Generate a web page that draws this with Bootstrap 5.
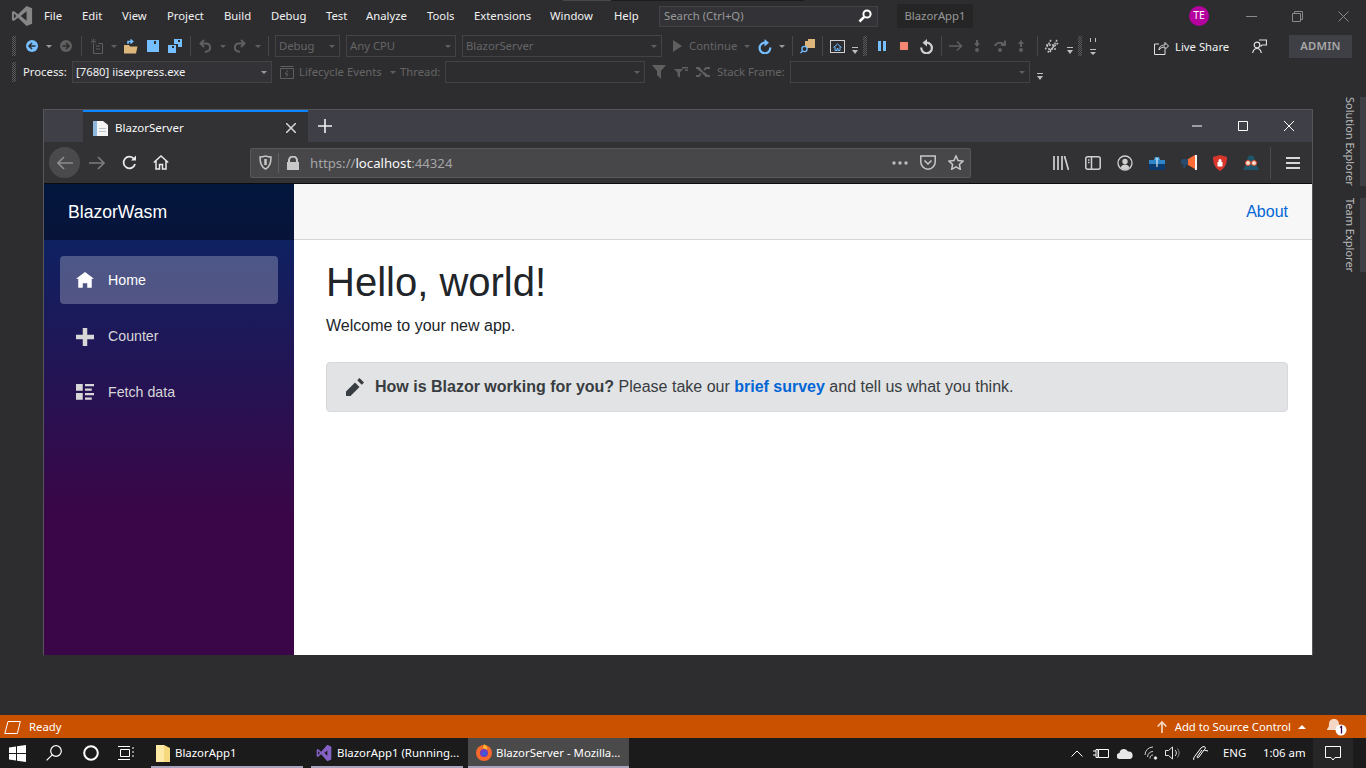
<!DOCTYPE html>
<html lang="en">
<head>
<meta charset="UTF-8" />
<meta name="viewport" content="width=device-width, initial-scale=1" />
<title>BlazorApp1 (Running)</title>
<link href="https://cdn.jsdelivr.net/npm/bootstrap@5.3.0/dist/css/bootstrap.min.css" rel="stylesheet" />
<style>
    html, body { height: 100%; }
    body {
        width: 1366px; height: 768px; overflow: hidden;
        background: #2d2d30; color: #f1f1f1;
        font-family: "Noto Sans", "Liberation Sans", sans-serif; font-size: 11.3px;
    }
    svg { display: block; flex-shrink: 0; }
    .vs-row { display: grid; align-items: center; white-space: nowrap; }
    .vs-title {
        height: 32px; padding-left: 11px;
        grid-template-columns: 33px 38px 40px 45px 57px 47px 55px 40px 61px 47px 76px 64px 45px 238px 292px 57px 46px 46px auto;
        background: linear-gradient(#47474a, #47474a) 563px 0 / 48px 1px no-repeat, linear-gradient(#1c1c1c, #1c1c1c) 611px 0 / 193px 1px no-repeat;
    }
    .vs-tools { height: 28px; padding-left: 12px; grid-template-columns: 14px 20px 14px 21px 9px 21px 13px 23px 21px 22px 9px 21px 14px 21px 13px 7px 71px 116px 211px 16px 55px 14px 21px 13px 8px 22px 8px 22px 11px 15px 22px 20px 21px 8px 25px 20px 24px 19px 7px 23px 11px 12px 64px 98px 37px auto; }
    .vs-debug { height: 24px; padding-left: 12px; grid-template-columns: 11px 49px 208px 19px 91px 10px 45px 207px 22px 22px 21px 73px 247px auto; }
    .vs-search { width: 219px; height: 21px; background: #333337; border: 1px solid #434346; color: #999; padding: 0 5px 0 4px; display: flex; align-items: center; justify-content: space-between; }
    .vs-solution { width: 76px; height: 24px; background: #252526; color: #999; display: flex; align-items: center; justify-content: center; }
    .vs-avatar { width: 20px; height: 20px; border-radius: 50%; background: #b4009e; color: #fff; font-size: 10.5px; display: flex; align-items: center; justify-content: center; }
    .tb-grip { width: 4px; height: 20px; background: repeating-conic-gradient(#5a5a5c 0 25%, transparent 0 50%) 0 0 / 2px 2px; }
    .tb-sep { width: 1px; height: 20px; background: #47474a; }
    .tb-caret { width: 0; height: 0; border: 3px solid transparent; border-top: 3px solid #9a9a9a; border-bottom: 0; }
    .tb-caret.off { border-top-color: #5f5f5f; }
    .tb-more { margin-top: 8px; }
    .status-caret { width: 0; height: 0; border: 4px solid transparent; border-bottom: 4px solid #fff; border-top: 0; margin-left: 7px; }
    .tb-combo { height: 22px; border: 1px solid #434346; color: #656565; padding: 0 4px 0 3px; display: flex; align-items: center; justify-content: space-between; }
    .tb-combo.on { color: #f1f1f1; background: #333337; border-color: #434346; }
    .combo-debug { width: 65px; }
    .combo-cpu { width: 110px; }
    .combo-wide { width: 200px; }
    .combo-stack { width: 240px; }
    .tb-off { color: #656565; }
    .tb-share { display: flex; gap: 6px; align-items: center; color: #f1f1f1; padding-top: 2px; }
    .tb-admin { width: 63px; height: 23px; background: #3f3f46; color: #a8a8a8; font-weight: 600; display: flex; align-items: center; justify-content: center; letter-spacing: .2px; }
    .vs-main { height: 631px; display: flex; }
    .ff-window { margin: 25px 0 0 43px; width: 1270px; height: 547px; border: 1px solid #55555a; border-bottom-color: #2d2d30; display: flex; flex-direction: column; background: #fff; }
    .vs-rail { flex: 1; display: flex; flex-direction: column; align-items: flex-end; gap: 12px; padding-top: 13px; color: #bdbdbd; font-size: 11px; }
    .rail-tab { display: flex; gap: 3px; }
    .rail-tab span { writing-mode: vertical-rl; line-height: 14px; }
    .rail-tab i { display: block; width: 6px; background: #3f3f46; }
    .ff-tabs { height: 32px; background: #3f4047; display: flex; align-items: stretch; padding-left: 39px; color: #f9f9fa; }
    .ff-tab { width: 225px; background: #323234; border-top: 2px solid #0a84ff; display: flex; align-items: center; padding: 1px 12px 0 10px; gap: 7px; font-size: 11.5px; }
    .ff-plus { width: 32px; margin-left: 1px; display: flex; align-items: center; justify-content: center; }
    .ff-winbtns { margin-left: auto; display: flex; align-items: center; gap: 36px; padding-right: 18px; }
    .ff-bar { height: 42px; background: #323234; border-bottom: 1px solid #0c0c0d; display: flex; align-items: center; padding-left: 5px; }
    .ff-back { width: 31px; height: 31px; border-radius: 50%; background: #4a4a4d; display: flex; align-items: center; justify-content: center; }
    .ff-nav { display: flex; align-items: center; gap: 16px; margin-left: 9px; }
    .ff-url { margin-left: 81px; width: 721px; height: 30px; background: #474749; border: 1px solid #58585a; border-radius: 2px; display: flex; align-items: center; padding-left: 8px; font-size: 13.2px; color: #a5a5a7; }
    .ff-address { padding-top: 3px; margin-left: 11px; }
    .ff-url b { color: #f9f9fa; font-weight: 400; }
    .ff-div { width: 1px; height: 20px; background: #5f5f61; margin: 0 8px 0 6px; }
    .ff-urlright { margin-left: auto; display: flex; align-items: center; gap: 12px; padding-right: 6px; }
    .ff-ext { margin-left: 82px; display: flex; align-items: center; gap: 16px; }
    .ff-sep2 { width: 1px; height: 32px; background: #4c4c4f; margin: 0 15px 0 11px; }
    .bz-page { flex: 1; display: flex; font-family: "Liberation Sans", Arial, sans-serif; font-size: 16px; min-height: 0; }
    .bz-side { width: 250px; background: linear-gradient(180deg, #052767 0%, #3a0647 70%); color: #d7d7d7; }
    .bz-brand { height: 56px; background: rgba(0,0,0,.4); color: #fff; font-size: 17.6px; padding-left: 24px; display: flex; align-items: center; }
    .bz-nav { padding: 16px 16px 0; gap: 8px; }
    .bz-nav .nav-link { height: 48px; color: #d7d7d7; font-size: 14.2px; padding: 2px 16px 0; display: flex; align-items: center; gap: 14px; border-radius: 4px; }
    .bz-nav .nav-link svg { fill: #d7d7d7; }
    .bz-nav .nav-link.active { background: rgba(255,255,255,.25); color: #fff; }
    .bz-nav .nav-link.active svg { fill: #fff; }
    .bz-content { flex: 1; color: #212529; min-width: 0; }
    .bz-top { height: 56px; background: #f7f7f7; border-bottom: 1px solid #d6d5d5; display: flex; align-items: center; justify-content: flex-end; padding-right: 24px; }
    .bz-top a, .bz-note a { color: #0366d6; text-decoration: none; }
    .bz-body { padding: 17.6px 24px 0 32px; }
    .bz-body h1 { font-size: 40px; font-weight: 400; line-height: 48px; margin-bottom: 8px; }
    .bz-body p { line-height: 24px; margin-bottom: 24px; }
    .bz-note { height: 50px; padding: 0 19px; margin: 0; gap: 11px; background: #e2e3e5; border-color: #d6d8db; color: #383d41; border-radius: 4px; }
    .vs-status { height: 23px; background: #ca5100; color: #fff; display: flex; align-items: center; padding: 1px 19px 0 4px; }
    .vs-status .right { margin-left: auto; display: flex; align-items: center; }
    .status-bell { margin-left: 21px; }
    .win-bar { height: 30px; background: #1b1b1b; padding-left: 9px; align-items: stretch; grid-template-columns: 37px 37px 35px 33px 160px 157px 603px 22px 24px 27px 21px 28px 30px 40px 50px auto; color: #fff; font-size: 11.4px; }
    .win-bar > div { display: flex; align-items: center; }
    .win-app { height: 30px; border-bottom: 2px solid #a9a4bd; gap: 5px; padding: 1px 0 0 5px; width: 152px; }
    .win-app.current { background: #4a4a4a; width: 161px; padding-left: 8px; gap: 4px; }
    .win-action { width: 40px; background: #262626; justify-content: center; }
</style>
</head>
<body>

<!-- title bar and menu -->
<div class="vs-row vs-title">
    <svg width="22" height="22" viewBox="0 0 24 24" fill="#868686"><path fill-rule="evenodd" d="M17 1 7.700 10.200 3 6.600 1 7.600v8.800l2 1 4.700-3.600L17 23l6-2.500v-17zM17 6.800v10.400L10.600 12zM3.200 9.400 5.800 12l-2.600 2.600z"/></svg>
    <span>File</span><span>Edit</span><span>View</span><span>Project</span><span>Build</span><span>Debug</span><span>Test</span><span>Analyze</span><span>Tools</span><span>Extensions</span><span>Window</span><span>Help</span>
    <div class="vs-search"><span>Search (Ctrl+Q)</span>
        <svg width="14" height="14" viewBox="0 0 14 14" fill="none" stroke="#fff" stroke-width="2"><circle cx="9" cy="5" r="3.600"/><path d="M6.200 7.800 1.500 12.500" stroke-width="2.600"/></svg>
    </div>
    <div class="vs-solution">BlazorApp1</div>
    <div class="vs-avatar">TE</div>
    <svg width="11" height="11" viewBox="0 0 11 11" stroke="#8a8a8a"><path d="M0 5.500h11"/></svg>
    <svg width="11" height="11" viewBox="0 0 11 11" fill="none" stroke="#8a8a8a"><path d="M.5 2.500h8v8h-8zM2.500 2.500v-2h8v8h-2"/></svg>
    <svg width="11" height="11" viewBox="0 0 11 11" stroke="#8a8a8a"><path d="M.5.500l10 10M10.500.500l-10 10"/></svg>
</div>

<!-- standard and debug toolbar -->
<div class="vs-row vs-tools">
    <div class="tb-grip"></div>
    <svg width="12" height="12" viewBox="0 0 12 12"><circle cx="6" cy="6" r="6" fill="#75beff"/><path d="M9.500 6h-6M6 3 3 6l3 3" fill="none" stroke="#2d2d30" stroke-width="1.500"/></svg>
    <div class="tb-caret"></div>
    <svg width="12" height="12" viewBox="0 0 12 12"><circle cx="6" cy="6" r="6" fill="#5f5f5f"/><path d="M2.500 6h6M6 3l3 3-3 3" fill="none" stroke="#2d2d30" stroke-width="1.500"/></svg>
    <div class="tb-sep"></div>
    <svg width="14" height="15" viewBox="0 0 14 15" fill="none" stroke="#5f5f5f"><path d="M3.500 5v9.500h9V4.500h-4" /><path d="M1 2.500h5M3.500 0v5M1.500.700l4 3.600M5.500.700l-4 3.600" stroke-dasharray="1.500 .7"/><path d="M6 7h4M6 10h4"/></svg>
    <div class="tb-caret off"></div>
    <svg width="15" height="15" viewBox="0 0 15 15"><path d="M0 6h5l1 1.500h7.500L12 14.500H0z" fill="#dcb67a"/><path d="M4 5V2.500h4M6.500.500l2.200 2-2.200 2" fill="none" stroke="#75beff" stroke-width="1.500"/></svg>
    <svg width="12" height="12" viewBox="0 0 12 12"><path fill-rule="evenodd" d="M0 0h12v12H0zM7 1v3h2V1z" fill="#75beff"/></svg>
    <svg width="14" height="14" viewBox="0 0 14 14"><path fill-rule="evenodd" d="M6 0h8v8h-4V5H6zM10 1v2h2V1z" fill="#75beff"/><path fill-rule="evenodd" d="M0 6h8v8H0zM4 7v2h2V7z" fill="#75beff"/></svg>
    <div class="tb-sep"></div>
    <svg width="12" height="14" viewBox="0 0 12 14" fill="none" stroke="#5f5f5f" stroke-width="2"><path d="M5 1 1.500 4.500 5 8M2 4.500h5a4 4 0 0 1 1 7.900L6 13"/></svg>
    <div class="tb-caret off"></div>
    <svg width="12" height="14" viewBox="0 0 12 14" fill="none" stroke="#5f5f5f" stroke-width="2"><path d="M7 1l3.500 3.500L7 8M10 4.500H5a4 4 0 0 0-1 7.900L6 13"/></svg>
    <div class="tb-caret off"></div>
    <div class="tb-sep"></div>
    <div class="tb-combo combo-debug"><span>Debug</span><div class="tb-caret off"></div></div>
    <div class="tb-combo combo-cpu"><span>Any CPU</span><div class="tb-caret off"></div></div>
    <div class="tb-combo combo-wide"><span>BlazorServer</span><div class="tb-caret off"></div></div>
    <svg width="9" height="12" viewBox="0 0 9 12" fill="#5f5f5f"><path d="M0 0l9 6-9 6z"/></svg>
    <span class="tb-off">Continue</span>
    <div class="tb-caret off"></div>
    <svg width="14" height="15" viewBox="0 0 14 15"><path d="M7 3.700A5.300 5.300 0 1 0 12.200 8.500" fill="none" stroke="#75beff" stroke-width="2.200"/><path d="M6.500 0v7.500L11 3.700z" fill="#75beff"/></svg>
    <div class="tb-caret"></div>
    <div class="tb-sep"></div>
    <svg width="15" height="16" viewBox="0 0 15 16"><path d="M5 3h3V1h7v9H5z" fill="#dcb67a"/><circle cx="4.500" cy="11" r="2.600" fill="#2d2d30" stroke="#75beff" stroke-width="1.300"/><path d="M2.500 13 .5 15" stroke="#75beff" stroke-width="1.500"/></svg>
    <div class="tb-sep"></div>
    <svg width="15" height="13" viewBox="0 0 15 13" fill="none"><rect x=".5" y=".5" width="14" height="12" stroke="#d0d0d0"/><path d="M3.500 7.500 7.500 4l4 3.500M5 6.500V10.500h2V8.500h1v2h2V6.500" stroke="#75beff"/></svg>
    <svg class="tb-more" width="6" height="7" viewBox="0 0 6 7" fill="#bdbdbd"><path d="M0 0h6v1H0zM0 3h6L3 7z"/></svg>
    <div class="tb-grip"></div>
    <svg width="8" height="10" viewBox="0 0 8 10" fill="#75beff"><path d="M0 0h3v10H0zM5 0h3v10H5z"/></svg>
    <svg width="8" height="8" viewBox="0 0 8 8" fill="#f48771"><path d="M0 0h8v8H0z"/></svg>
    <svg width="13" height="15" viewBox="0 0 13 15"><path d="M6.500 3.700A5.300 5.300 0 1 1 1.300 8.500" fill="none" stroke="#d0d0d0" stroke-width="2.200"/><path d="M7 0v7.500L2.500 3.700z" fill="#d0d0d0"/></svg>
    <div class="tb-sep"></div>
    <svg width="14" height="12" viewBox="0 0 14 12" fill="none" stroke="#5f5f5f" stroke-width="1.500"><path d="M0 6h12M8 1.500 12.500 6 8 10.500"/></svg>
    <svg width="6" height="12" viewBox="0 0 6 12" fill="#5f5f5f"><path d="M2 0h2v3h2L3 7 0 3h2z"/><circle cx="3" cy="10" r="2"/></svg>
    <svg width="12" height="12" viewBox="0 0 12 12" fill="none" stroke="#5f5f5f" stroke-width="2"><path d="M1 6a5 4 0 0 1 9-1.500M11 .5V5H7"/><circle cx="6" cy="10" r="1" fill="#5f5f5f"/></svg>
    <svg width="6" height="12" viewBox="0 0 6 12" fill="#5f5f5f"><path d="M3 0l3 4H4v3H2V4H0z"/><circle cx="3" cy="10" r="2"/></svg>
    <div class="tb-sep"></div>
    <svg width="15" height="15" viewBox="0 0 15 15" fill="none" stroke="#c0c0c0" stroke-width="1.500" stroke-dasharray="2 1"><path d="M7 1 1 11M13 1 6 13M14 4 3 14M2 6h9M4 10h9"/></svg>
    <svg class="tb-more" width="6" height="7" viewBox="0 0 6 7" fill="#bdbdbd"><path d="M0 0h6v1H0zM0 3h6L3 7z"/></svg>
    <div class="tb-grip"></div>
    <svg width="6" height="17" viewBox="0 0 6 17" fill="#bdbdbd"><path d="M0 0h1v4H0zM5 0h1v4H5zM0 11h6v1H0zM0 14h6l-3 3z"/></svg>
    <div class="tb-share">
        <svg width="15" height="15" viewBox="0 0 15 15" fill="none" stroke="#e0e0e0"><path d="M5 4H.5v10.500H11V10M5 10c0-3 2-5 6-5V2.500L14.500 6 11 9.500V7C8 7 6 8 5 10z"/></svg>
        <span>Live Share</span>
    </div>
    <svg width="15" height="15" viewBox="0 0 15 15" fill="none" stroke="#e0e0e0" stroke-width="1.200"><circle cx="5" cy="6" r="2.800"/><path d="M.7 14c.5-3 2-4.500 4.300-4.500S8.800 11 9.300 14M7 1h7.500v5H10l-1.500 1.500"/></svg>
    <div class="tb-admin">ADMIN</div>
</div>

<div class="vs-row vs-debug">
    <div class="tb-grip"></div>
    <span>Process:</span>
    <div class="tb-combo combo-wide on"><span>[7680] iisexpress.exe</span><div class="tb-caret"></div></div>
    <svg width="14" height="13" viewBox="0 0 14 13" fill="none" stroke="#5f5f5f"><path d="M.5 2.500h13v10H.5zM.5.500h13M8 4 5 8h3l-2 3"/></svg>
    <span class="tb-off">Lifecycle Events</span>
    <div class="tb-caret off"></div>
    <span class="tb-off">Thread:</span>
    <div class="tb-combo combo-wide"><span></span><div class="tb-caret off"></div></div>
    <svg width="14" height="14" viewBox="0 0 14 14" fill="#5f5f5f"><path d="M0 0h14L9 6v8L5 10V6z"/></svg>
    <svg width="14" height="12" viewBox="0 0 14 12" fill="#5f5f5f"><path d="M0 3h9L6 6.500V12L3.500 9.500V6.500zM8 1h6v1.500H8zM11 3.500h3V5h-3z"/></svg>
    <svg width="14" height="10" viewBox="0 0 14 10" fill="none" stroke="#5f5f5f" stroke-width="1.800"><path d="M0 1h3l7 8h4M0 9h3l2-2.500M8 3l2-2h4M1 1l11 8"/></svg>
    <span class="tb-off">Stack Frame:</span>
    <div class="tb-combo combo-stack"><span></span><div class="tb-caret off"></div></div>
    <svg class="tb-more" width="6" height="7" viewBox="0 0 6 7" fill="#bdbdbd"><path d="M0 0h6v1H0zM0 3h6L3 7z"/></svg>
</div>

<div class="vs-main">
    <div class="ff-window">
        <div class="ff-tabs">
            <div class="ff-tab">
                <svg width="15" height="16" viewBox="0 0 15 16"><path d="M0 1h10l5 4v11H0z" fill="#f4f4f4"/><path d="M0 1h4v15H0z" fill="#8fb8dc"/><path d="M6 8h7v1H6zM6 11h7v1H6z" fill="#b8c4cf"/></svg>
                <span>BlazorServer</span>
                <svg class="ms-auto" width="10" height="10" viewBox="0 0 10 10" stroke="#d8d8d8" stroke-width="1.500"><path d="M0 0l10 10M10 0 0 10"/></svg>
            </div>
            <div class="ff-plus"><svg width="14" height="14" viewBox="0 0 14 14" stroke="#f0f0f0" stroke-width="1.600"><path d="M7 0v14M0 7h14"/></svg></div>
            <div class="ff-winbtns">
                <svg width="10" height="10" viewBox="0 0 10 10" stroke="#fff"><path d="M0 5h10"/></svg>
                <svg width="10" height="10" viewBox="0 0 10 10" fill="none" stroke="#fff"><path d="M.5.500h9v9h-9z"/></svg>
                <svg width="10" height="10" viewBox="0 0 10 10" stroke="#fff"><path d="M0 0l10 10M10 0 0 10"/></svg>
            </div>
        </div>
        <div class="ff-bar">
            <div class="ff-back"><svg width="16" height="14" viewBox="0 0 16 14" fill="none" stroke="#8c8c8e" stroke-width="1.700"><path d="M16 7H1M7 1 1 7l6 6"/></svg></div>
            <div class="ff-nav">
                <svg width="17" height="14" viewBox="0 0 17 14" fill="none" stroke="#7c7c7e" stroke-width="1.700"><path d="M0 7h15M9 1l6 6-6 6"/></svg>
                <svg width="15" height="15" viewBox="0 0 15 15" fill="none" stroke="#eaeaea" stroke-width="1.800"><path d="M13 9a5.800 5.800 0 1 1-1-5"/><path d="M14 .5V5.500H9" fill="#eaeaea" stroke="none"/></svg>
                <svg width="16" height="15" viewBox="0 0 16 15" fill="none" stroke="#eaeaea" stroke-width="1.500"><path d="M.8 7.500 8 1l7.200 6.500M3 6v8h3.500V9.500h3V14H13V6"/></svg>
            </div>
            <div class="ff-url">
                <svg width="13" height="15" viewBox="0 0 13 15" fill="none" stroke="#c8c8c8" stroke-width="1.500"><path d="M1 2c4 0 5-1 5.500-1S8 2 12 2c0 6-1 10-5.500 12C2 12 1 8 1 2z"/><path d="M6.500 4v6" stroke-width="2.500"/></svg>
                <div class="ff-div"></div>
                <svg width="12" height="14" viewBox="0 0 12 14" fill="#c8c8c8"><path fill-rule="evenodd" d="M1 6V4.500a5 5 0 0 1 10 0V6h1v8H0V6zM3 6h6V4.500a3 3 0 0 0-6 0z"/></svg>
                <span class="ff-address">https://<b>localhost</b>:44324</span>
                <div class="ff-urlright">
                    <svg width="16" height="4" viewBox="0 0 16 4" fill="#bdbdbd"><circle cx="2" cy="2" r="1.700"/><circle cx="8" cy="2" r="1.700"/><circle cx="14" cy="2" r="1.700"/></svg>
                    <svg width="16" height="15" viewBox="0 0 16 15" fill="none" stroke="#c8c8c8" stroke-width="1.500"><path d="M.8 1h14.400v6a7.200 7.200 0 0 1-14.400 0zM4.500 5.500 8 9l3.500-3.500"/></svg>
                    <svg width="16" height="15" viewBox="0 0 16 15" fill="none" stroke="#c8c8c8" stroke-width="1.500"><path d="M8 1l2.100 4.500 4.900.600-3.600 3.400.9 4.800L8 11.900l-4.300 2.400.9-4.800L1 6.100l4.900-.6z"/></svg>
                </div>
            </div>
            <div class="ff-ext">
                <svg width="16" height="14" viewBox="0 0 16 14" fill="none" stroke="#d0d0d0" stroke-width="1.700"><path d="M1 0v14M5 0v14M9 0v14M11.500 0l4 14"/></svg>
                <svg width="16" height="14" viewBox="0 0 16 14" fill="none" stroke="#d0d0d0" stroke-width="1.500"><rect x=".8" y=".8" width="14.400" height="12.400" rx="2"/><path d="M6.500 1v12M3 4h1.500M3 6.500h1.500"/></svg>
                <svg width="16" height="16" viewBox="0 0 16 16"><circle cx="8" cy="8" r="7" fill="none" stroke="#d0d0d0" stroke-width="1.300"/><circle cx="8" cy="6.500" r="2.700" fill="#d0d0d0"/><path d="M3.500 12.500c1-2 2.500-3 4.500-3s3.500 1 4.500 3a6 6 0 0 1-9 0z" fill="#d0d0d0"/></svg>
                <svg width="16" height="14" viewBox="0 0 16 14"><path d="M0 4h16v4H0z" fill="#2f86c9"/><path d="M0 8h16v6H0z" fill="#0d3b70"/><path d="M5 4 6 1h4l1 3z" fill="#4da3e0"/><path d="M7.500 2h1v9h-1z" fill="#fff"/></svg>
                <svg width="16" height="16" viewBox="0 0 16 16"><path d="M0 6c0-1 1-2 2-2h5v6H5l-1 3H2l1-3c-2 0-3-1-3-2z" fill="#274a6e"/><path d="M7 4l7-4v14L7 10z" fill="#ff6b35"/><path d="M14 0h2v15h-2z" fill="#f4f4f4"/></svg>
                <svg width="14" height="16" viewBox="0 0 14 16"><path d="M7 0l7 2c0 7-2 11-7 14C2 13 0 9 0 2z" fill="#d9362b"/><path d="M4.500 7h5v4.500h-5zM5.500 7V5.500a1.500 1.500 0 0 1 3 0V7" fill="#fff"/></svg>
                <svg width="16" height="15" viewBox="0 0 16 15"><path d="M5 2c1-2 5-2 6 0l2 7 3 6H0l3-6z" fill="#20566a"/><circle cx="5" cy="8" r="2.500" fill="#f2e3cf" stroke="#d9442b"/><circle cx="11" cy="8" r="2.500" fill="#f2e3cf" stroke="#d9442b"/></svg>
            </div>
            <div class="ff-sep2"></div>
            <svg width="14" height="12" viewBox="0 0 14 12" stroke="#d8d8d8" stroke-width="1.800"><path d="M0 1h14M0 6h14M0 11h14"/></svg>
        </div>

        <div class="bz-page">
            <div class="bz-side">
                <div class="bz-brand">BlazorWasm</div>
                <nav class="nav flex-column bz-nav">
                    <a class="nav-link active" href="#"><svg width="18" height="18" viewBox="0 0 8 8"><path d="M4 0 0 3h1v4h2V5h2v2h2V3.030L8 3z"/></svg>Home</a>
                    <a class="nav-link" href="#"><svg width="18" height="18" viewBox="0 0 8 8"><path d="M3 0v3H0v2h3v3h2V5h3V3H5V0z"/></svg>Counter</a>
                    <a class="nav-link" href="#"><svg width="18" height="18" viewBox="0 0 8 8"><path d="M0 0v3h3V0zm4 0v1h4V0zm0 2v1h3V2zM0 4v3h3V4zm4 0v1h4V4zm0 2v1h3V6z"/></svg>Fetch data</a>
                </nav>
            </div>
            <div class="bz-content">
                <div class="bz-top"><a href="#">About</a></div>
                <div class="bz-body">
                    <h1>Hello, world!</h1>
                    <p>Welcome to your new app.</p>
                    <div class="alert alert-secondary d-flex align-items-center bz-note">
                        <svg width="18" height="18" viewBox="0 0 8 8" fill="#383d41"><path d="M6 0 5 1l2 2 1-1zM4 2 0 6v2h2l4-4z"/></svg>
                        <span><strong>How is Blazor working for you?</strong> Please take our <a href="#" class="fw-bold">brief survey</a> and tell us what you think.</span>
                    </div>
                </div>
            </div>
        </div>
    </div>
    <div class="vs-rail">
        <div class="rail-tab"><span>Solution Explorer</span><i></i></div>
        <div class="rail-tab"><span>Team Explorer</span><i></i></div>
    </div>
</div>

<!-- status bar -->
<div class="vs-status">
    <svg class="me-2" width="17" height="13" viewBox="0 0 17 13" fill="none" stroke="#fff"><path d="M4 .5h12.300l-3 12H.8z"/></svg>
    <span>Ready</span>
    <div class="right">
        <svg class="me-2" width="10" height="12" viewBox="0 0 10 12" fill="none" stroke="#f3d6c3" stroke-width="1.700"><path d="M5 12V1M.7 5.500 5 1l4.300 4.500"/></svg>
        <span>Add to Source Control</span>
        <div class="status-caret"></div>
        <svg class="status-bell" width="20" height="18" viewBox="0 0 20 18"><path d="M7 1c3 0 5 2 5 5 0 3 1 4 2 5v1H0v-1c1-1 2-2 2-5 0-3 2-5 5-5z" fill="#f3d6c3"/><circle cx="14" cy="12" r="5.500" fill="#fff"/><path d="M13 9.500l1.500-1V15.500" fill="none" stroke="#3a0647" stroke-width="1.300"/></svg>
    </div>
</div>

<!-- windows taskbar -->
<div class="vs-row win-bar">
    <div><svg width="17" height="17" viewBox="0 0 17 17" fill="#fff"><path d="M0 2.400 7 1.400v6.600H0zM8 1.300 17 0v8H8zM0 9h7v6.600l-7-1zM8 9h9v8l-9-1.300z"/></svg></div>
    <div><svg width="16" height="16" viewBox="0 0 16 16" fill="none" stroke="#fff" stroke-width="1.200"><circle cx="10" cy="6" r="5.300"/><path d="M6.200 9.800.6 15.400"/></svg></div>
    <div><svg width="16" height="16" viewBox="0 0 16 16" fill="none" stroke="#fff" stroke-width="2"><circle cx="8" cy="8" r="6.800"/></svg></div>
    <div><svg width="16" height="16" viewBox="0 0 16 16" fill="none" stroke="#fff"><path d="M2.500 4.500h9v7h-9zM0 1.500h12M0 14.500h12M14 3h2M14 7h2M14 11h2"/></svg></div>
    <div><div class="d-flex align-items-center win-app">
        <svg width="14" height="18" viewBox="0 0 14 18"><path d="M0 1h8l6 3v14H0z" fill="#f6d97e"/><path d="M0 1h8v17H0z" fill="#ffe9a6"/></svg>
        <span>BlazorApp1</span>
    </div></div>
    <div><div class="d-flex align-items-center win-app">
        <svg width="16" height="18" viewBox="0 0 24 24" preserveAspectRatio="none" fill="#8661c5"><path fill-rule="evenodd" d="M17 1 7.700 10.200 3 6.600 1 7.600v8.800l2 1 4.700-3.600L17 23l6-2.500v-17zM17 8.500v7L12.500 12zM3.200 9.400 5.800 12l-2.600 2.600z"/></svg>
        <span>BlazorApp1 (Running...</span>
    </div></div>
    <div><div class="d-flex align-items-center win-app current">
        <svg width="16" height="17" viewBox="0 0 16 17"><circle cx="8" cy="9" r="8" fill="#f56a2b"/><path d="M8 0c3 2 4 4 3 6L7 4z" fill="#ffb52e"/><circle cx="8" cy="9" r="4" fill="#6a3fc4"/><circle cx="8.500" cy="9.500" r="2" fill="#2f62d9"/></svg>
        <span>BlazorServer - Mozilla...</span>
    </div></div>
    <div><svg width="12" height="7" viewBox="0 0 12 7" fill="none" stroke="#fff"><path d="M.5 6.500 6 1l5.500 5.500"/></svg></div>
    <div><svg width="16" height="12" viewBox="0 0 16 12" fill="none" stroke="#fff"><path d="M5.500 2.500h10v8h-10zM0 4h3M0 8h3M3 2.500h2v8H3z"/></svg></div>
    <div><svg width="16" height="11" viewBox="0 0 16 11" fill="#e8e8e8"><path d="M3 11a3 3 0 0 1-.5-6A4.500 4.500 0 0 1 11 3.500 3.800 3.800 0 0 1 12.500 11z"/></svg></div>
    <div><svg width="14" height="14" viewBox="0 0 14 14" fill="none" stroke="#cfcfcf"><path d="M1 9a8 8 0 0 1 8-8M3.500 11a5.500 5.500 0 0 1 5.500-5.500M6 12.500A3 3 0 0 1 9 9"/><circle cx="11.500" cy="12" r="1.300" fill="#fff"/></svg></div>
    <div><svg width="16" height="14" viewBox="0 0 16 14" fill="none" stroke="#e8e8e8"><path d="M.5 4.500h3L7.500 1v12l-4-3.500h-3z"/><path d="M10 4a4 4 0 0 1 0 6" /><path d="M12.500 2.500a7 7 0 0 1 0 9" stroke="#888"/></svg></div>
    <div><svg width="16" height="16" viewBox="0 0 16 16" fill="none" stroke="#fff"><path d="M1 15c-1-1 0-3 1-4l6-8c1-1 3-2 4-1s0 2-1 3l-5 7c-1 1-2 1-2 0l5-7M11 5l4 1"/></svg></div>
    <div>ENG</div>
    <div>1:06 am</div>
    <div class="win-action"><svg width="16" height="15" viewBox="0 0 16 15" fill="none" stroke="#fff"><path d="M.5.500h15v11H10L8 14l-2-2.500H.5z"/></svg></div>
</div>

<script src="https://cdn.jsdelivr.net/npm/bootstrap@5.3.0/dist/js/bootstrap.bundle.min.js"></script>
</body>
</html>
